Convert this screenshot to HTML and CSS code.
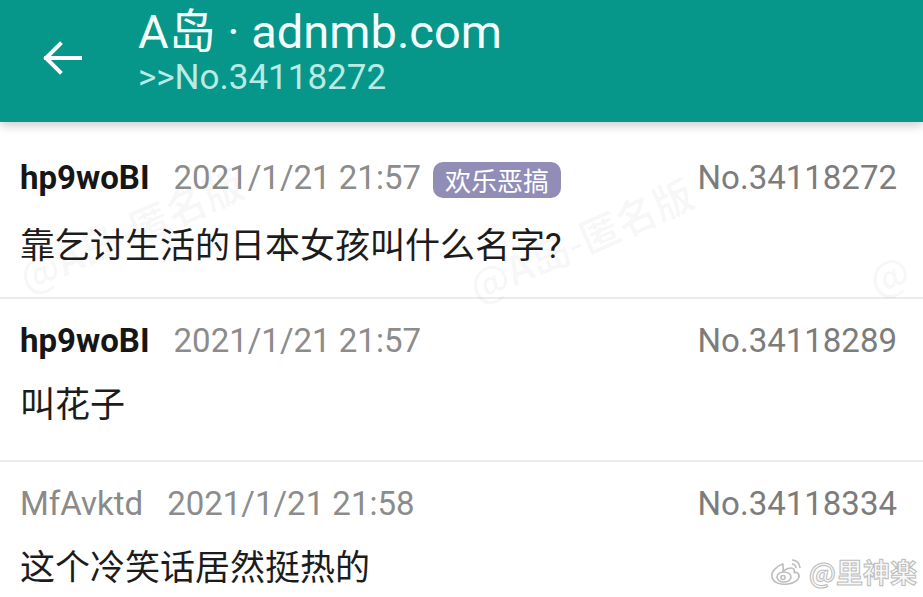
FILE: index.html
```html
<!DOCTYPE html>
<html lang="zh">
<head>
<meta charset="utf-8">
<title>A岛 · adnmb.com</title>
<link rel="stylesheet" href="styles.css">
</head>
<body>
<div class="screen">
  <header class="appbar">
    <svg class="back" width="40" height="34" viewBox="0 0 40 34" aria-hidden="true">
      <path d="M38 17H4M18 3L4 17l14 14" fill="none" stroke="#fff" stroke-width="4" stroke-linecap="square" stroke-linejoin="miter"/>
    </svg>
    <div class="titles">
      <div class="title">A岛 · adnmb.com</div>
      <div class="subtitle">&gt;&gt;No.34118272</div>
    </div>
  </header>

  <main class="list">
    <article class="post first">
      <div class="meta">
        <span class="name po">hp9woBI</span>
        <span class="date">2021/1/21 21:57</span>
        <span class="tag">欢乐恶搞</span>
        <span class="no">No.34118272</span>
      </div>
      <p class="content">靠乞讨生活的日本女孩叫什么名字?</p>
    </article>
    <article class="post">
      <div class="meta">
        <span class="name po">hp9woBI</span>
        <span class="date">2021/1/21 21:57</span>
        <span class="no">No.34118289</span>
      </div>
      <p class="content">叫花子</p>
    </article>
    <article class="post">
      <div class="meta">
        <span class="name">MfAvktd</span>
        <span class="date">2021/1/21 21:58</span>
        <span class="no">No.34118334</span>
      </div>
      <p class="content">这个冷笑话居然挺热的</p>
    </article>
  </main>

  <div class="wm wm1">@A岛-匿名版</div>
  <div class="wm wm2">@A岛-匿名版</div>
  <div class="wm wm3">@</div>

  <div class="weibo">
    <svg width="36" height="32" viewBox="0 0 36 32" aria-hidden="true">
      <g fill="none" stroke="#bdbdbd" stroke-width="1.6">
        <path d="M14 8c-7 2-12 8-11 13 1 6 9 8 16 7 7-1 12-5 11-9-1-3-4-3-5-2 1-3 0-5-3-5-2 0-5 1-8 3 1-4-1-8 0-7z"/>
        <ellipse cx="15" cy="21" rx="7" ry="5"/>
        <circle cx="14" cy="21.5" r="2"/>
        <path d="M23 4c4 0 8 3 8 8M23 8c2 0 4 2 4 4"/>
      </g>
    </svg>
    <span class="wb-text">@里神楽</span>
  </div>
</div>
</body>
</html>
```
FILE: styles.css
```css
html, body {
  margin: 0;
  padding: 0;
  background: #ffffff;
}

.screen {
  position: relative;
  width: 923px;
  height: 597px;
  overflow: hidden;
  background: #ffffff;
  font-family: Roboto, "Noto Sans CJK SC", sans-serif;
}

.appbar {
  position: relative;
  z-index: 2;
  height: 122px;
  box-sizing: border-box;
  background: #07968a;
  display: flex;
  align-items: flex-start;
  padding-left: 42px;
  box-shadow: 0 3px 10px rgba(0, 0, 0, 0.22);
}

.back {
  margin-top: 41px;
  flex: none;
}

.titles {
  margin-left: 56px;
  padding-top: 5px;
}

.title {
  font-size: 47px;
  line-height: 53px;
  color: #f4fffd;
  white-space: nowrap;
}

.subtitle {
  font-size: 35px;
  line-height: 40px;
  color: #b8ebe4;
  white-space: nowrap;
}

.list {
  padding-top: 14px;
}

.post {
  padding: 22px 26px 30px 20px;
  border-bottom: 2px solid #ebebeb;
}

.post.first {
  padding-bottom: 26px;
}

.post.first .content {
  margin-top: 25px;
}

.meta {
  display: flex;
  align-items: center;
  height: 40px;
  font-size: 33px;
  line-height: 40px;
  white-space: nowrap;
}

.name {
  color: #8a8a8a;
  margin-right: 24px;
}

.name.po {
  color: #161616;
  font-weight: 700;
}

.date {
  color: #8c8c8c;
}

.tag {
  margin-left: 12px;
  margin-top: 4px;
  height: 36px;
  line-height: 36px;
  padding: 0 12px;
  border-radius: 10px;
  background: #918db7;
  color: #ffffff;
  font-family: "Noto Sans CJK SC", sans-serif;
  font-size: 26px;
}

.no {
  margin-left: auto;
  color: #7c7c7c;
}

.content {
  margin: 21px 0 0;
  font-family: Roboto, "Noto Sans CJK SC", sans-serif;
  font-size: 35px;
  line-height: 48px;
  color: #1c1c1c;
}

.wm {
  position: absolute;
  z-index: 1;
  font-family: "Noto Sans CJK SC", sans-serif;
  font-size: 40px;
  font-weight: 700;
  color: rgba(0, 0, 0, 0.03);
  transform: rotate(-24deg);
  white-space: nowrap;
  pointer-events: none;
}

.wm1 { left: 10px; top: 200px; }
.wm2 { left: 460px; top: 210px; }
.wm3 { left: 868px; top: 245px; }

.weibo {
  position: absolute;
  z-index: 3;
  right: 6px;
  bottom: 6px;
  display: flex;
  align-items: center;
  gap: 4px;
}

.wb-text {
  font-family: "Noto Sans CJK SC", sans-serif;
  font-size: 27px;
  font-weight: 700;
  color: #f7f7f7;
  -webkit-text-stroke: 1px #bcbcbc;
}
```
